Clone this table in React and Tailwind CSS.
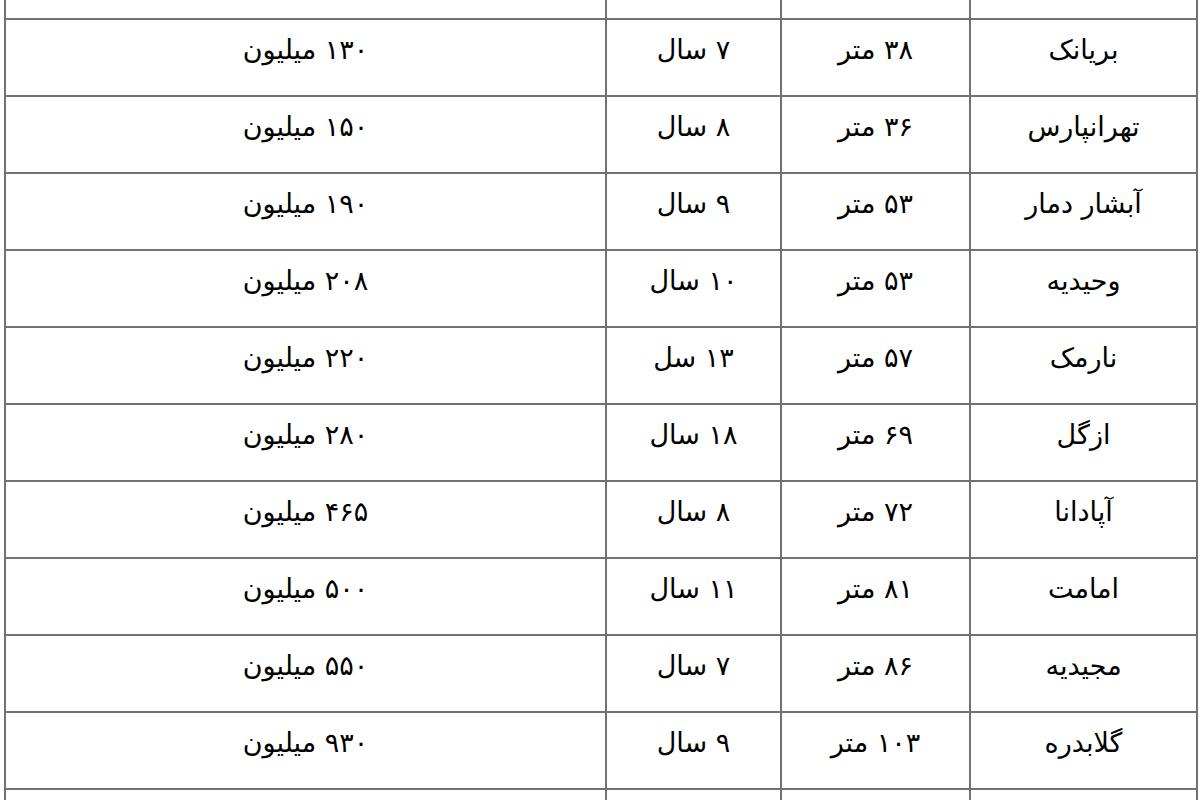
// App.jsx - price table (Persian), bordered grid rows

const rows = [
  { name: '', area: '', age: '', price: '' },
  { name: 'بریانک', area: '۳۸ متر', age: '۷ سال', price: '۱۳۰ میلیون' },
  { name: 'تهرانپارس', area: '۳۶ متر', age: '۸ سال', price: '۱۵۰ میلیون' },
  { name: 'آبشار دمار', area: '۵۳ متر', age: '۹ سال', price: '۱۹۰ میلیون' },
  { name: 'وحیدیه', area: '۵۳ متر', age: '۱۰ سال', price: '۲۰۸ میلیون' },
  { name: 'نارمک', area: '۵۷ متر', age: '۱۳ سل', price: '۲۲۰ میلیون' },
  { name: 'ازگل', area: '۶۹ متر', age: '۱۸ سال', price: '۲۸۰ میلیون' },
  { name: 'آپادانا', area: '۷۲ متر', age: '۸ سال', price: '۴۶۵ میلیون' },
  { name: 'امامت', area: '۸۱ متر', age: '۱۱ سال', price: '۵۰۰ میلیون' },
  { name: 'مجیدیه', area: '۸۶ متر', age: '۷ سال', price: '۵۵۰ میلیون' },
  { name: 'گلابدره', area: '۱۰۳ متر', age: '۹ سال', price: '۹۳۰ میلیون' },
  { name: 'آ', area: '', age: '', price: '' },
];

const font = { fontFamily: '"DejaVu Sans", "Noto Sans", sans-serif' };

function Cell({ children, last }) {
  return (
    <div
      dir="rtl"
      className={[
        'flex items-center justify-center pb-[14px] text-[27px] text-black',
        last ? '' : 'border-r-2 border-[#727272]',
      ].join(' ')}
    >
      {children}
    </div>
  );
}

export default function App() {
  return (
    <div className="h-[800px] w-[1200px] overflow-hidden bg-white" style={font}>
      <div className="-mt-[57px] ml-[4px] w-[1194px] border-x-2 border-[#727272]">
        {rows.map((r, i) => (
          <div
            key={i}
            className="grid h-[77px] grid-cols-[601px_175px_189px_225px] border-b-2 border-[#727272]"
          >
            <Cell>{r.price}</Cell>
            <Cell>{r.age}</Cell>
            <Cell>{r.area}</Cell>
            <Cell last>{r.name}</Cell>
          </div>
        ))}
      </div>
    </div>
  );
}
